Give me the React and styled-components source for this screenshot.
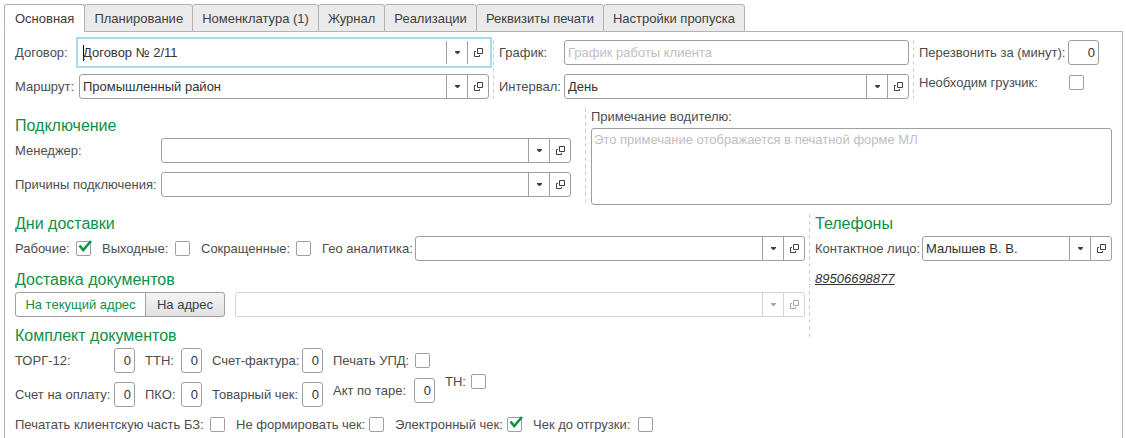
import React, { useId, useState } from "react";
import styled, { createGlobalStyle, css } from "styled-components";

const GlobalStyle = createGlobalStyle`
  *, *::before, *::after { box-sizing: border-box; }
  body {
    margin: 0;
    background: #fff;
    color: #404040;
    font: 13px/17px "Liberation Sans", Arial, sans-serif;
  }
  button, input, textarea { font: inherit; color: inherit; margin: 0; }
`;

const line = "#a0a0a0";
const green = "#0d9147";

const Page = styled.main`
  min-height: 100vh;
  display: flex;
  flex-direction: column;
  padding: 4px 3px 0 4px;
`;

const TabList = styled.div`
  display: flex;
  margin-bottom: -1px;
  z-index: 1;
`;

const Tab = styled.button`
  height: 28px;
  padding: 0 9px;
  border: 1px solid #b2b2b2;
  border-bottom-color: ${(p) => (p.$active ? "#fff" : "#b2b2b2")};
  border-radius: 3px 3px 0 0;
  background: ${(p) => (p.$active ? "#fff" : "#ebebeb")};
  white-space: nowrap;
  & + & { margin-left: -1px; }
  &:first-child { padding: 0 10px; }
`;

const Panel = styled.form`
  flex: 1;
  display: flex;
  flex-direction: column;
  gap: 9px;
  padding: 8px 10px 4px;
  border: 1px solid #b2b2b2;
  border-bottom: 0;
`;

const Columns = styled.div`
  display: grid;
  grid-template-columns: ${(p) => p.$columns};
  column-gap: ${(p) => p.$gap || 4}px;
`;

const Group = styled.div`
  display: flex;
  flex-direction: column;
  gap: 9px;
  min-width: 0;
  padding-top: ${(p) => p.$top || 0}px;
  ${(p) =>
    p.$divided &&
    css`
      padding-left: 6px;
      background: repeating-linear-gradient(#d0d0d0 0 4px, transparent 4px 7px) left / 1px 100% no-repeat;
    `}
`;

const PhoneGroup = styled(Group)`
  align-self: start;
  padding-bottom: 50px;
`;

const NoteField = styled.div`
  display: flex;
  flex-direction: column;
  gap: 3px;
`;

const Title = styled.h2`
  margin: 0 0 -7px;
  font-size: 16px;
  line-height: 20px;
  font-weight: 400;
  color: ${green};
`;

const Row = styled.div`
  display: flex;
  align-items: center;
  gap: ${(p) => p.$gap ?? 11}px;
  min-height: ${(p) => (p.$low ? 17 : 25)}px;
`;

const FieldBox = styled.div`
  display: flex;
  align-items: center;
  flex: ${(p) => (p.$grow ? "1 1 0" : "none")};
  min-width: 0;
`;

const Label = styled.label`
  flex: none;
  width: ${(p) => (p.$w ? `${p.$w}px` : "auto")};
  color: #4d4d4d;
  white-space: nowrap;
`;

const boxed = css`
  border: 1px solid ${line};
  border-radius: 3px;
  background: #fff;
  color: #333;
  outline: 0;
  &::placeholder { color: #c0c0c0; opacity: 1; }
`;

const TextInput = styled.input`
  ${boxed}
  flex: 1;
  min-width: 0;
  height: 25px;
  padding: 0 3px;
`;

const NumberInput = styled.input`
  ${boxed}
  width: ${(p) => (p.$wide ? 31 : 21)}px;
  height: 25px;
  padding: 0 3px;
  text-align: right;
`;

const NoteArea = styled.textarea`
  ${boxed}
  display: block;
  width: 100%;
  height: 77px;
  padding: 2px;
  resize: none;
`;

const ComboBox = styled.div`
  flex: 1;
  display: flex;
  min-width: 0;
  height: 25px;
  border: 1px solid ${line};
  border-radius: 3px;
  ${(p) =>
    p.$focused &&
    css`
      border-color: transparent;
      border-radius: 0;
      outline: 2px solid #a6dcf2;
      outline-offset: 1px;
    `}
  ${(p) => p.$disabled && css`border-color: #d4d4d4;`}
`;

const ComboInput = styled.input`
  flex: 1;
  min-width: 0;
  padding: 0 3px;
  border: 0;
  outline: 0;
  color: #333;
  background: ${(p) =>
    p.$caret ? "linear-gradient(#000, #000) 3px center / 1px 16px no-repeat" : "none"};
`;

const ComboButton = styled.button`
  flex: none;
  display: flex;
  align-items: center;
  justify-content: center;
  width: 21px;
  padding: 0;
  border: 0;
  border-left: 1px solid ${line};
  background: none;
  color: #404040;
  &:disabled { border-color: #d4d4d4; color: #a8a8a8; }
`;

const CheckWrap = styled.span`
  position: relative;
  flex: none;
  width: 15px;
  height: 15px;
  margin-left: ${(p) => (p.$inset ? 1 : 0)}px;
  svg {
    position: absolute;
    left: 2px;
    bottom: 4px;
    pointer-events: none;
  }
`;

const CheckInput = styled.input`
  appearance: none;
  display: block;
  width: 15px;
  height: 15px;
  border: 1px solid ${line};
  border-radius: 2px;
  background: #fff;
`;

const Segmented = styled.div`
  display: flex;
  flex: none;
`;

const Segment = styled.button`
  height: 25px;
  padding: 0;
  width: ${(p) => (p.$wide ? 131 : 80)}px;
  border: 1px solid ${line};
  border-radius: 0 3px 3px 0;
  background: ${(p) => (p.$active ? "#fff" : "linear-gradient(#f4f4f4, #e2e2e2)")};
  color: ${(p) => (p.$active ? green : "#404040")};
  white-space: nowrap;
  &:first-child { border-radius: 3px 0 0 3px; }
  & + & { margin-left: -1px; }
`;

const Phone = styled.a`
  align-self: flex-start;
  font-style: italic;
  line-height: 18px;
  color: #333;
`;

const DocumentSet = styled.div`
  display: flex;
  gap: 10px;
`;

const Stack = styled.div`
  display: flex;
  flex-direction: column;
  gap: ${(p) => p.$gap || 9}px;
  padding-top: ${(p) => p.$top || 0}px;
`;

const ArrowIcon = () => (
  <svg width="5" height="3" viewBox="0 0 5 3" aria-hidden="true">
    <path d="M0 0h5v1L3 3H2L0 1z" fill="currentColor" />
  </svg>
);

const OpenIcon = () => (
  <svg width="9" height="9" viewBox="0 0 9 9" fill="none" stroke="currentColor" aria-hidden="true">
    <path d="M3.5 .5h5v5h-5zM2 3.5H.5v5h5V7" />
  </svg>
);

const TickIcon = () => (
  <svg width="15" height="12" viewBox="0 0 15 12" aria-hidden="true">
    <path d="M1.5 5.5 5.2 10 13 1" fill="none" stroke={green} strokeWidth="2.6" />
  </svg>
);

function Combo({ label, w, value = "", focused, disabled }) {
  const id = useId();
  return (
    <FieldBox $grow>
      {label && <Label htmlFor={id} $w={w}>{label}</Label>}
      <ComboBox $focused={focused} $disabled={disabled}>
        <ComboInput
          id={id}
          role="combobox"
          aria-expanded="false"
          aria-label={label ? undefined : "Адрес доставки"}
          defaultValue={value}
          disabled={disabled}
          $caret={focused}
        />
        <ComboButton type="button" aria-label="Выбрать" disabled={disabled}><ArrowIcon /></ComboButton>
        <ComboButton type="button" aria-label="Открыть" disabled={disabled}><OpenIcon /></ComboButton>
      </ComboBox>
    </FieldBox>
  );
}

function Check({ label, w, checked = false, inset }) {
  const id = useId();
  const [on, setOn] = useState(checked);
  return (
    <FieldBox>
      <Label htmlFor={id} $w={w}>{label}</Label>
      <CheckWrap $inset={inset}>
        <CheckInput id={id} type="checkbox" checked={on} onChange={() => setOn(!on)} />
        {on && <TickIcon />}
      </CheckWrap>
    </FieldBox>
  );
}

function Count({ label, w, wide }) {
  const id = useId();
  return (
    <FieldBox>
      <Label htmlFor={id} $w={w}>{label}</Label>
      <NumberInput id={id} inputMode="numeric" defaultValue="0" $wide={wide} />
    </FieldBox>
  );
}

const tabs = [
  "Основная",
  "Планирование",
  "Номенклатура (1)",
  "Журнал",
  "Реализации",
  "Реквизиты печати",
  "Настройки пропуска",
];

const targets = ["На текущий адрес", "На адрес"];

export default function App() {
  const [tab, setTab] = useState(tabs[0]);
  const [target, setTarget] = useState(targets[0]);

  return (
    <>
      <GlobalStyle />
      <Page>
        <TabList role="tablist">
          {tabs.map((name) => (
            <Tab key={name} role="tab" aria-selected={name === tab} $active={name === tab} onClick={() => setTab(name)}>
              {name}
            </Tab>
          ))}
        </TabList>

        <Panel>
          <Columns $columns="474fr 416fr 199px">
            <Group>
              <Row><Combo label="Договор:" w={64} value="Договор № 2/11" focused /></Row>
              <Row><Combo label="Маршрут:" w={64} value="Промышленный район" /></Row>
            </Group>
            <Group $divided>
              <Row>
                <FieldBox $grow>
                  <Label htmlFor="schedule" $w={65}>График:</Label>
                  <TextInput id="schedule" placeholder="График работы клиента" />
                </FieldBox>
              </Row>
              <Row><Combo label="Интервал:" w={65} value="День" /></Row>
            </Group>
            <Group $divided>
              <Row><Count label="Перезвонить за (минут):" w={149} wide /></Row>
              <Row $low><Check label="Необходим грузчик:" w={149} inset /></Row>
            </Group>
          </Columns>

          <Columns $columns="556fr 527fr" $gap={14}>
            <Group $top={8}>
              <Title>Подключение</Title>
              <Row><Combo label="Менеджер:" w={146} /></Row>
              <Row><Combo label="Причины подключения:" w={146} /></Row>
            </Group>
            <Group $divided>
              <NoteField>
                <Label htmlFor="note">Примечание водителю:</Label>
                <NoteArea id="note" placeholder="Это примечание отображается в печатной форме МЛ" />
              </NoteField>
            </Group>
          </Columns>

          <Columns $columns="790fr 303fr">
            <Group>
              <Title>Дни доставки</Title>
              <Row>
                <Check label="Рабочие:" w={61} checked />
                <Check label="Выходные:" w={73} />
                <Check label="Сокращенные:" w={95} />
                <Combo label="Гео аналитика:" w={93} />
              </Row>
              <Title>Доставка документов</Title>
              <Row $gap={10}>
                <Segmented>
                  {targets.map((name, i) => (
                    <Segment
                      key={name}
                      type="button"
                      aria-pressed={name === target}
                      $active={name === target}
                      $wide={i === 0}
                      onClick={() => setTarget(name)}
                    >
                      {name}
                    </Segment>
                  ))}
                </Segmented>
                <Combo disabled />
              </Row>
              <Title>Комплект документов</Title>
              <DocumentSet>
                <Stack>
                  <Count label="ТОРГ-12:" w={99} />
                  <Count label="Счет на оплату:" w={99} />
                </Stack>
                <Stack>
                  <Count label="ТТН:" w={36} />
                  <Count label="ПКО:" w={36} />
                </Stack>
                <Stack>
                  <Count label="Счет-фактура:" w={90} />
                  <Count label="Товарный чек:" w={90} />
                </Stack>
                <Stack $gap={5}>
                  <Row><Check label="Печать УПД:" w={81} inset /></Row>
                  <Count label="Акт по таре:" w={81} />
                </Stack>
                <Stack $top={25}>
                  <Row $low><Check label="ТН:" w={25} inset /></Row>
                </Stack>
              </DocumentSet>
              <Row $low>
                <Check label="Печатать клиентскую часть БЗ:" w={195} />
                <Check label="Не формировать чек:" w={133} />
                <Check label="Электронный чек:" w={112} checked />
                <Check label="Чек до отгрузки:" w={105} />
              </Row>
            </Group>
            <PhoneGroup $divided>
              <Title>Телефоны</Title>
              <Row><Combo label="Контактное лицо:" w={107} value="Малышев В. В." /></Row>
              <Phone href="tel:89506698877">89506698877</Phone>
            </PhoneGroup>
          </Columns>
        </Panel>
      </Page>
    </>
  );
}
